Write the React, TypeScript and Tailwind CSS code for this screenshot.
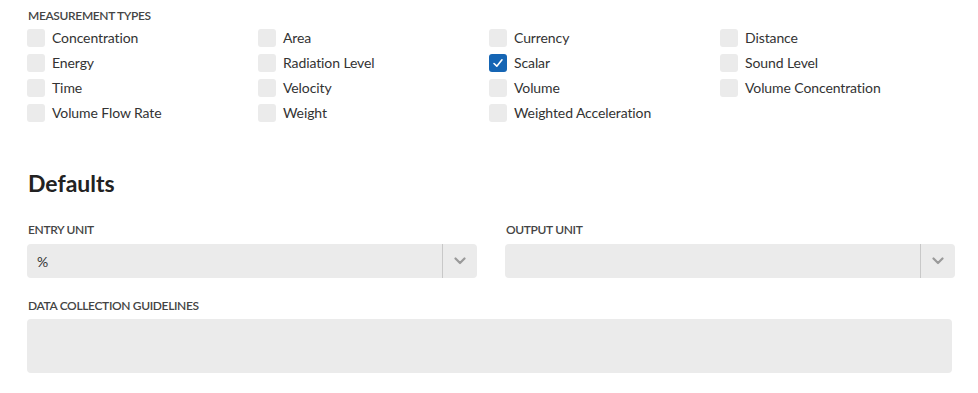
import React from "react";

const types: [string, boolean][] = [
  ["Concentration", false],
  ["Area", false],
  ["Currency", false],
  ["Distance", false],
  ["Energy", false],
  ["Radiation Level", false],
  ["Scalar", true],
  ["Sound Level", false],
  ["Time", false],
  ["Velocity", false],
  ["Volume", false],
  ["Volume Concentration", false],
  ["Volume Flow Rate", false],
  ["Weight", false],
  ["Weighted Acceleration", false],
];

function Check({ checked }: { checked: boolean }) {
  if (checked) {
    return (
      <div className="w-[18px] h-[18px] rounded-[3px] bg-[#1565b4] flex items-center justify-center shrink-0">
        <svg width="12" height="12" viewBox="0 0 12 12" fill="none">
          <path d="M2 6.5 L4.8 9.2 L10 2.8" stroke="white" strokeWidth="1.6" strokeLinecap="round" strokeLinejoin="round" />
        </svg>
      </div>
    );
  }
  return <div className="w-[18px] h-[18px] rounded-[3px] bg-[#ebebeb] shrink-0" />;
}

function Chevron() {
  return (
    <svg width="12" height="8" viewBox="0 0 12 8" fill="none">
      <path d="M1.5 1.5 L6 6 L10.5 1.5" stroke="#9a9a9a" strokeWidth="2.2" strokeLinecap="round" strokeLinejoin="round" />
    </svg>
  );
}

function Select({ value }: { value?: string }) {
  return (
    <div className="h-[34px] rounded-[4px] bg-[#ebebeb] flex items-stretch">
      <div className="flex-1 flex items-center pl-[10px] text-[14px] text-[#333]">{value}</div>
      <div className="w-px bg-[#c8c8c8]" />
      <div className="w-[34px] flex items-center justify-center">
        <Chevron />
      </div>
    </div>
  );
}

const labelCls = "text-[12px] leading-[16px] font-semibold text-[#444] tracking-[-0.35px] pl-px";

export default function App() {
  return (
    <div className="w-[978px] h-[393px] bg-white text-[#333] pl-[27px] pr-[23px] pt-[8px]" style={{ fontFamily: '"Source Sans Pro", "Lato", "Liberation Sans", sans-serif' }}>
      <div className={labelCls}>MEASUREMENT TYPES</div>
      <div className="mt-[5px] grid grid-cols-[231px_231px_231px_231px] gap-y-[7px]">
        {types.map(([name, c]) => (
          <div key={name} className="flex items-center h-[18px] gap-[7px]">
            <Check checked={c} />
            <span className="text-[14px] leading-[18px] text-[#333] tracking-[-0.1px]">{name}</span>
          </div>
        ))}
      </div>
      <div className="mt-[47px] text-[23px] leading-[28px] font-bold text-[#222] pl-px">Defaults</div>
      <div className="mt-[25px] grid grid-cols-2 gap-x-[28px] w-[928px]">
        <div>
          <div className={labelCls}>ENTRY UNIT</div>
          <div className="mt-[6px]">
            <Select value="%" />
          </div>
        </div>
        <div>
          <div className={labelCls}>OUTPUT UNIT</div>
          <div className="mt-[6px]">
            <Select />
          </div>
        </div>
      </div>
      <div className={"mt-[20px] " + labelCls}>DATA COLLECTION GUIDELINES</div>
      <div className="mt-[5px] w-[925px] h-[54px] rounded-[4px] bg-[#ebebeb]" />
    </div>
  );
}
